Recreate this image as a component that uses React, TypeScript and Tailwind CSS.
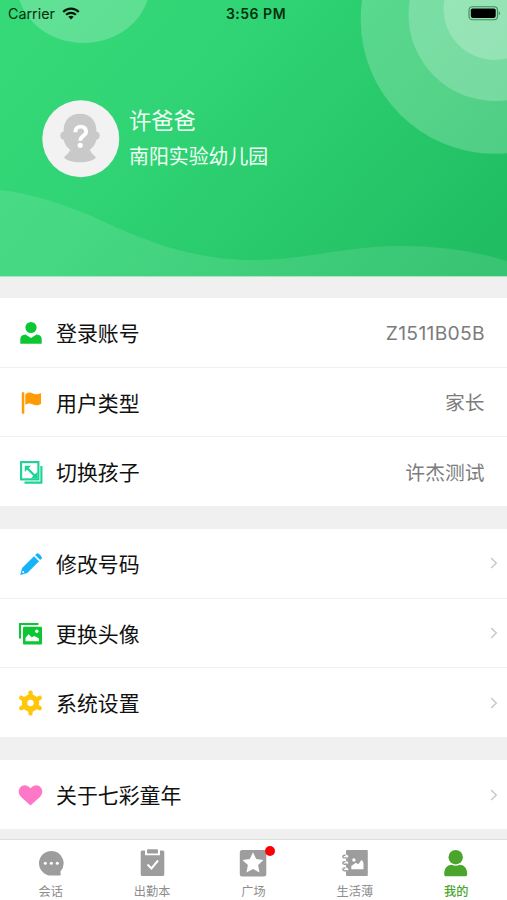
import React from "react";

const CJK = "font-['Liberation_Sans','Noto_Sans_CJK_SC',sans-serif]";

function Backdrop() {
  return (
    <svg className="absolute inset-0 h-full w-full" viewBox="0 0 507 276" preserveAspectRatio="none">
      <defs>
        <linearGradient id="sky" gradientUnits="userSpaceOnUse" x1="60" y1="0" x2="420" y2="330">
          <stop offset="0" stopColor="#35d978" />
          <stop offset="0.35" stopColor="#2fd373" />
          <stop offset="1" stopColor="#20bd62" />
        </linearGradient>
      </defs>
      <rect width="507" height="276" fill="url(#sky)" />
      <g fill="#fff">
        <ellipse cx="83.500" cy="-16" rx="66.500" ry="59" fillOpacity="0.22" />
        <circle cx="495" cy="19.500" r="134.300" fillOpacity="0.21" />
        <circle cx="495" cy="14.500" r="86.500" fillOpacity="0.21" />
        <circle cx="495" cy="8.500" r="51.500" fillOpacity="0.22" />
        <path
          d="M0 190C35 194 70 206 100 220C150 243 195 260 253 260C305 260 345 246 400 246C440 246 475 251 507 261V276H0Z"
          fillOpacity="0.115"
        />
      </g>
    </svg>
  );
}

function StatusBar() {
  return (
    <div className="relative grid h-[27px] grid-cols-3 items-center pl-2 pr-[6px] font-[Inter,sans-serif] text-[#06300f]">
      <div className="flex items-center gap-[7px]">
        <span className="text-[14.3px]">Carrier</span>
        <svg width="18" height="13" viewBox="0 0 18 13" fill="none" stroke="#031a08" strokeWidth="2.2">
          <path d="M1.2 5C5.6.6 12.400.6 16.800 5" />
          <path d="M4.100 7.800c2.700-2.600 7.100-2.600 9.800 0" />
          <path d="M9 12.500 6.300 9.800c1.500-1.400 3.900-1.400 5.400 0z" fill="#031a08" stroke="none" />
        </svg>
      </div>
      <span className="whitespace-nowrap pl-[3px] text-center text-[14px] font-semibold tracking-[0.500px]">3:56 PM</span>
      <svg className="justify-self-end" width="33" height="15" viewBox="0 0 33 15">
        <rect x="1" y=".7" width="28.500" height="13" rx="3.500" fill="none" stroke="#3b8d59" strokeWidth="1.100" />
        <rect x="2.800" y="2.500" width="24.900" height="9.400" rx="1.800" fill="#000" />
        <path d="M30.800 5.200c1.600.5 1.600 3.500 0 4z" fill="#3b8d59" />
      </svg>
    </div>
  );
}

function Avatar() {
  return (
    <svg className="shrink-0" width="78" height="78" viewBox="0 0 78 78">
      <circle cx="38.800" cy="38.800" r="38.500" fill="#f2f2f2" />
      <g fill="#c9c9c9">
        <path d="M38 13.700c-10.500 0-17 7.500-16.300 17.800-4.200.2-4.800 7.500-.2 8.300 1.500 5 3.500 7.700 6.300 9.700 2.700 3 6.200 4.500 10.200 4.500s7.500-1.500 10.200-4.500c2.800-2 4.800-4.700 6.300-9.700 4.600-.8 4-8.100-.2-8.300.7-10.300-5.800-17.800-16.300-17.800z" />
        <path d="M28 50c6 3.200 14 3.200 20 0 1.500 4.500 5.500 5.500 5.800 8-4 3.200-9.800 4.300-15.800 4.300S26 61.200 22.200 58c.3-2.500 4.500-3.500 5.800-8z" />
      </g>
      <path d="M33.300 32.200c0-7.500 10.900-7 10.900-.8 0 4.500-5.900 4.200-5.900 9.300" fill="none" stroke="#fff" strokeWidth="3.900" />
      <circle cx="38.200" cy="45.300" r="2.600" fill="#fff" />
    </svg>
  );
}

const AccountIcon = () => (
  <svg width="24" height="24" viewBox="0 0 24 24" fill="#0bc732">
    <circle cx="12" cy="6.500" r="5.600" />
    <path d="M1.300 22.800v-4.500c0-3 2-4.500 5.200-4.700L12 17.100l5.500-3.500c3.200.2 5.200 1.700 5.200 4.700v4.500z" />
  </svg>
);

const FlagIcon = () => (
  <svg width="24" height="24" viewBox="0 0 24 24" fill="#ff9b05">
    <rect x="2.800" y="1.300" width="2.500" height="21.400" />
    <path d="M6.300 3.500c3-2.700 5.400-2.200 7.700-1 2.500 1.200 4.700.9 8-.5v11c-3.300 1.600-5.500 1.500-8 .4s-4.700-1.700-7.700.4z" />
  </svg>
);

const SwapIcon = () => (
  <svg width="24" height="24" viewBox="0 0 24 24" fill="none" stroke="#1bd392" strokeWidth="2.100">
    <rect x="2.100" y="2.100" width="17.300" height="17.300" />
    <path d="M22.400 6v16.600H5.500" />
    <path d="m8 8 8 8" strokeWidth="2.300" />
    <path d="M5.800 5.800h6.200l-6.200 6.200zM18.400 18.400h-6.600l6.600-6.600z" fill="#1bd392" stroke="none" />
  </svg>
);

const PencilIcon = () => (
  <svg width="24" height="24" viewBox="0 0 24 24" fill="#14b3fa">
    <path d="m15 4.300 5 5L8.300 21 1.200 23l1.900-7z" />
    <path d="m16.200 3.100 1.700-1.600c1.100-1 5.900 3.600 4.800 4.900l-1.600 1.700z" />
    <circle cx="4.200" cy="20.100" r="1" fill="#fff" />
  </svg>
);

const PhotosIcon = () => (
  <svg width="25" height="24" viewBox="0 0 25 24">
    <path d="M2 16.500V2h18.500" fill="none" stroke="#0bc732" strokeWidth="2" />
    <rect x="5" y="4.700" width="19" height="17.700" rx="1" fill="#0bc732" />
    <path d="M7.500 19.200v-3.500l3-3.400 3.300 3 2.800-1.300 4.400 2.400v2.800z" fill="#fff" />
    <circle cx="18.800" cy="9.300" r="1.700" fill="#fff" />
  </svg>
);

const GearIcon = () => (
  <svg width="25" height="26" viewBox="0 0 25 26">
    <g fill="#ffc70b">
      <circle cx="12.500" cy="13" r="8.700" />
      <g stroke="#ffc70b" strokeWidth="4.400" strokeLinecap="round">
        <path d="M12.500 2.600v20.800M3.300 7.800l18.400 10.400M3.300 18.200l18.400-10.400" />
      </g>
    </g>
    <circle cx="12.500" cy="13" r="3.200" fill="#fff" />
  </svg>
);

const HeartIcon = () => (
  <svg width="26" height="23" viewBox="0 0 26 23" fill="#ff78c8">
    <path d="M13 22 3.200 13C-4 5.500 6-4.500 13 4 20-4.500 30 5.500 22.800 13z" />
  </svg>
);

const Chevron = () => (
  <svg width="8" height="12" viewBox="0 0 8 12" fill="none" stroke="#cbcbcb" strokeWidth="1.600">
    <path d="m1.200 1 5 5-5 5" />
  </svg>
);

type RowProps = { icon: React.ReactNode; label: string; value?: string; latin?: boolean };

function Row({ icon, label, value, latin }: RowProps) {
  return (
    <div className="flex min-h-0 flex-1 items-center pl-[18px]">
      <span className="flex w-[25px] shrink-0 justify-center pt-px">{icon}</span>
      <span className="ml-[13px] flex-1 pt-[3px] text-[20.900px] leading-7 text-[#111]">{label}</span>
      {value ? (
        <span
          className={
            latin
              ? "mr-[22px] pt-[2px] font-[Inter,sans-serif] text-[19.300px] tracking-[0.300px] text-[#7c7c7c]"
              : "mr-[22.500px] pt-[2px] text-[19.800px] leading-7 text-[#7c7c7c]"
          }
        >
          {value}
        </span>
      ) : (
        <span className="mr-[9px]">
          <Chevron />
        </span>
      )}
    </div>
  );
}

const ChatTab = () => (
  <svg width="28" height="28" viewBox="0 0 28 28" fill="#9d9d9d">
    <path d="M14.300 2a12.300 12.300 0 1 0 0 24.600h8.500c.8 0 1.200-.5.900-1.200l-.3-2.900A12.300 12.300 0 0 0 14.300 2z" />
    <g fill="#fff">
      <circle cx="8.300" cy="14.300" r="1.500" />
      <circle cx="14.300" cy="14.300" r="1.500" />
      <circle cx="20.300" cy="14.300" r="1.500" />
    </g>
  </svg>
);

const ClipTab = () => (
  <svg width="28" height="28" viewBox="0 0 28 28">
    <path d="M4.500 1.500H7v4.700h15V1.500h2.500c1.200 0 1.800.7 1.800 1.800v22c0 1.200-.6 1.800-1.800 1.800h-20c-1.200 0-1.800-.6-1.800-1.800v-22c0-1.100.6-1.800 1.800-1.800z" fill="#9d9d9d" />
    <rect x="9" y=".3" width="11" height="4.200" rx="1" fill="#9d9d9d" />
    <path d="m9.500 15.500 4 4 6.500-8" fill="none" stroke="#fff" strokeWidth="2" />
  </svg>
);

const StarTab = () => (
  <svg width="28" height="28" viewBox="0 0 28 28">
    <rect x=".800" y="1" width="26.500" height="26.500" rx="2.500" fill="#9d9d9d" />
    <path d="m14 3.300 3.200 6.800 7.300.9-5.400 5.100 1.400 7.500-6.500-3.700-6.500 3.700 1.400-7.500L3.500 11l7.300-.9z" fill="#fff" />
  </svg>
);

const BookTab = () => (
  <svg width="28" height="28" viewBox="0 0 28 28">
    <path d="M6.500 1h19c.9 0 1.300.5 1.300 1.300v23.500c0 .9-.4 1.300-1.300 1.300h-19c-.9 0-1.500-.4-1.500-1.300V2.300C5 1.500 5.600 1 6.500 1z" fill="#9d9d9d" />
    {[7.700, 14.100, 20.500].map((y) => (
      <g key={y} fill="none" strokeLinecap="round">
        <ellipse cx="4.700" cy={y} rx="2.600" ry="2.100" fill="#fff" />
        <path d={`M6.200 ${y + 1.2}H3.600c-2.600 0-2.200-3 .4-2.600`} stroke="#9d9d9d" strokeWidth="1.400" />
      </g>
    ))}
    <path d="M10.300 20.300v-3.200l4.500-3.400 2.500 1.500 3.200-4.200c1.900 1 2 3 2 5v4.300z" fill="#fff" />
    <circle cx="12.900" cy="11" r="1.700" fill="#fff" />
  </svg>
);

const MeTab = () => (
  <svg width="28" height="28" viewBox="0 0 28 28" fill="#4ba52d">
    <circle cx="13.700" cy="8.200" r="7.200" />
    <path d="M2.200 25c0-6.500 3.800-9.300 7.500-9.300 2.700 1.300 5.300 1.300 8 0 3.700 0 7.500 2.800 7.500 9.300 0 1.500-.7 2.300-2 2.300h-19c-1.300 0-2-.8-2-2.300z" />
  </svg>
);

const tabs = [
  { label: "会话", icon: <ChatTab /> },
  { label: "出勤本", icon: <ClipTab /> },
  { label: "广场", icon: <StarTab />, dot: true },
  { label: "生活薄", icon: <BookTab /> },
  { label: "我的", icon: <MeTab />, active: true },
];

export default function App() {
  return (
    <div className={`flex h-[900px] w-[507px] flex-col overflow-hidden bg-[#f0f0f0] ${CJK}`}>
      <header className="relative h-[277px] shrink-0 border-b border-[#a5e6bf]">
        <Backdrop />
        <StatusBar />
        <div className="relative mt-[73px] flex pl-[42px]">
          <Avatar />
          <div className="ml-[9px] mt-[5px] flex flex-col text-[#f0fff5]">
            <span className="text-[22.300px] leading-[34px]">许爸爸</span>
            <span className="mt-px text-[19.900px] leading-[34px]">南阳实验幼儿园</span>
          </div>
        </div>
      </header>
      <main className="flex flex-1 flex-col">
        <section className="mt-[21px] flex h-[208px] flex-col divide-y divide-[#f0f0f0] bg-white">
          <Row icon={<AccountIcon />} label="登录账号" value="Z1511B05B" latin />
          <Row icon={<FlagIcon />} label="用户类型" value="家长" />
          <Row icon={<SwapIcon />} label="切换孩子" value="许杰测试" />
        </section>
        <section className="mt-[23px] flex h-[208px] flex-col divide-y divide-[#f0f0f0] bg-white">
          <Row icon={<PencilIcon />} label="修改号码" />
          <Row icon={<PhotosIcon />} label="更换头像" />
          <Row icon={<GearIcon />} label="系统设置" />
        </section>
        <section className="mt-[23px] flex h-[69px] flex-col bg-white">
          <Row icon={<HeartIcon />} label="关于七彩童年" />
        </section>
      </main>
      <nav className="grid h-[61px] shrink-0 grid-cols-5 border-t border-[#dedede] bg-white">
        {tabs.map((t) => (
          <div key={t.label} className="flex flex-col items-center pt-[9px]">
            <span className="relative h-[28px]">
              {t.icon}
              {t.dot && <i className="absolute -right-[8px] -top-[3px] h-[10px] w-[10px] rounded-full bg-[#fb0007]" />}
            </span>
            <span
              className={
                t.active
                  ? "mt-[6px] text-[12.200px] leading-[18px] font-medium text-[#4ba52d]"
                  : "mt-[6px] text-[12.200px] leading-[18px] text-[#8e8e8e]"
              }
            >
              {t.label}
            </span>
          </div>
        ))}
      </nav>
    </div>
  );
}
